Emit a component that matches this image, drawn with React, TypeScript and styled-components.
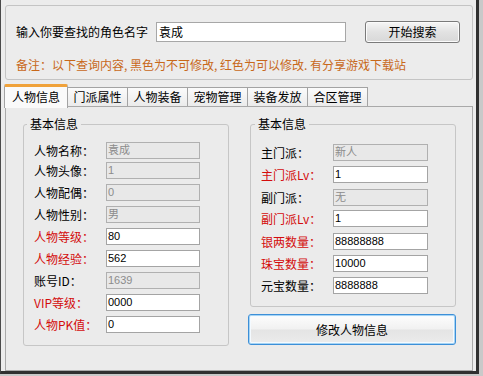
import React from "react";
import styled, { createGlobalStyle, css } from "styled-components";

const GlobalStyle = createGlobalStyle`
  html, body { margin: 0; padding: 0; background: #c9c9c9; }
  body { font-family: "Noto Sans CJK SC", "Liberation Sans", sans-serif; font-size: 12px; color: #000; }
  * { box-sizing: border-box; }
`;

const Frame = styled.div`
  width: 479px;
  height: 374px;
  background: #ececec;
  border-left: 1px solid #4a4a4a;
  border-right: 3px solid #303030;
  border-bottom: 3px solid #303030;
  padding: 5px 3px 0 4px;
  display: flex;
  flex-direction: column;
`;

const SearchGroup = styled.div`
  height: 75px;
  border: 1px solid #c4c4c4;
  border-radius: 3px;
  padding: 15px 0 0 10px;
  display: flex;
  flex-direction: column;
`;

const SearchRow = styled.div`
  display: flex;
  align-items: center;
  height: 22px;
`;

const SearchLabel = styled.span`
  width: 140px;
  line-height: 16px;
`;

const SearchInput = styled.div`
  width: 190px;
  height: 20px;
  background: #fff;
  border: 1px solid #a7a7a7;
  padding-left: 2px;
  line-height: 18px;
`;

const PushButton = styled.button`
  margin-left: 19px;
  width: 95px;
  height: 22px;
  border: 1px solid #7a7a7a;
  border-radius: 3px;
  background: linear-gradient(#f6f6f6, #e2e2e2 50%, #d8d8d8);
  box-shadow: inset 0 0 0 1px #fbfbfb;
  font-family: "Noto Sans CJK SC", sans-serif;
  font-size: 12px;
  line-height: 18px;
  padding: 0;
  color: #000;
`;

const Note = styled.div`
  margin-top: 14px;
  line-height: 16px;
  color: #c8681a;
  white-space: nowrap;
`;

const TabStrip = styled.div`
  margin-top: 4px;
  height: 22px;
  display: flex;
  align-items: flex-end;
`;

const Tab = styled.div<{ $active?: boolean }>`
  width: 60px;
  height: 19px;
  border: 1px solid #a3a3a3;
  border-bottom: none;
  border-left: none;
  background: linear-gradient(#fbfbfb, #ebebeb);
  text-align: center;
  line-height: 18px;
  font-size: 12px;
  ${(p) =>
    p.$active &&
    css`
      position: relative;
      z-index: 1;
      width: 64px;
      height: 24px;
      margin-left: -1px;
      margin-bottom: -2px;
      border-left: 1px solid #a3a3a3;
      border-top: 3px solid #f0a23a;
      border-radius: 2px 2px 0 0;
      background: #fafafa;
      line-height: 19px;
    `}
`;

const Panel = styled.div`
  height: 265px;
  border: 1px solid #a9a9a9;
  background: #ebebeb;
  padding: 9px 0 0 17px;
  display: flex;
  gap: 21px;
  align-items: flex-start;
`;

const Column = styled.div`
  display: flex;
  flex-direction: column;
`;

const Group = styled.fieldset<{ $padTop: number }>`
  margin: 0;
  width: 206px;
  min-width: 0;
  border: 1px solid #c6c6c6;
  border-radius: 3px;
  padding: ${(p) => p.$padTop}px 0 12px 10px;
`;

const Legend = styled.legend<{ $ml: number }>`
  margin-left: ${(p) => p.$ml}px;
  padding: 0 3px;
  font-size: 12px;
  line-height: 16px;
`;

const Row = styled.div<{ $mt?: number }>`
  display: flex;
  align-items: center;
  height: 17px;
  margin-top: ${(p) => p.$mt ?? 0}px;
`;

const Label = styled.span<{ $red?: boolean }>`
  width: 72px;
  font-size: 12px;
  line-height: 16px;
  color: ${(p) => (p.$red ? "#d40c0c" : "#000")};
  font-family: "Noto Sans CJK SC", "Liberation Serif", serif;
  white-space: nowrap;
`;

const Field = styled.div<{ $disabled?: boolean; $w: number }>`
  width: ${(p) => p.$w}px;
  height: 17px;
  border: 1px solid ${(p) => (p.$disabled ? "#b0b0b0" : "#a4a4a4")};
  background: ${(p) => (p.$disabled ? "#e8e8e8" : "#fff")};
  color: ${(p) => (p.$disabled ? "#8c8c8c" : "#000")};
  padding-left: 1px;
  font-family: "Liberation Sans", "Noto Sans CJK SC", sans-serif;
  font-size: 11px;
  line-height: 15px;
  white-space: nowrap;
  overflow: hidden;
`;

const BigButton = styled.button`
  margin-top: 7px;
  margin-left: -2px;
  width: 208px;
  height: 31px;
  border: 1px solid #3c8fd8;
  border-radius: 3px;
  background: linear-gradient(#fdfdfd, #f1f1f1 48%, #e4e4e4 52%, #ececec);
  box-shadow: inset 0 0 0 1px #a6d4f4, inset 0 0 0 2px #f4faff;
  font-family: "Noto Sans CJK SC", sans-serif;
  font-size: 12px;
  color: #000;
  padding: 0;
`;

type Item = { label: string; value: string; red?: boolean; disabled?: boolean; mt?: number };

const leftItems: Item[] = [
  { label: "人物名称：", value: "袁成", disabled: true },
  { label: "人物头像：", value: "1", disabled: true, mt: 3 },
  { label: "人物配偶：", value: "0", disabled: true, mt: 5 },
  { label: "人物性别：", value: "男", disabled: true, mt: 5 },
  { label: "人物等级：", value: "80", red: true, mt: 5 },
  { label: "人物经验：", value: "562", red: true, mt: 5 },
  { label: "账号ID：", value: "1639", disabled: true, mt: 5 },
  { label: "VIP等级：", value: "0000", red: true, mt: 5 },
  { label: "人物PK值：", value: "0", red: true, mt: 5 },
];

const rightItems: Item[] = [
  { label: "主门派：", value: "新人", disabled: true },
  { label: "主门派Lv：", value: "1", red: true, mt: 5 },
  { label: "副门派：", value: "无", disabled: true, mt: 6 },
  { label: "副门派Lv：", value: "1", red: true, mt: 4 },
  { label: "银两数量：", value: "88888888", red: true, mt: 6 },
  { label: "珠宝数量：", value: "10000", red: true, mt: 5 },
  { label: "元宝数量：", value: "8888888", mt: 5 },
];

const tabs = ["人物信息", "门派属性", "人物装备", "宠物管理", "装备发放", "合区管理"];

export default function App() {
  return (
    <>
      <GlobalStyle />
      <Frame>
        <SearchGroup>
          <SearchRow>
            <SearchLabel>输入你要查找的角色名字</SearchLabel>
            <SearchInput>袁成</SearchInput>
            <PushButton>开始搜索</PushButton>
          </SearchRow>
          <Note>备注：以下查询内容, 黑色为不可修改, 红色为可以修改. 有分享游戏下载站</Note>
        </SearchGroup>
        <TabStrip>
          {tabs.map((t, i) => (
            <Tab key={t} $active={i === 0}>
              {t}
            </Tab>
          ))}
        </TabStrip>
        <Panel>
          <Group $padTop={10}>
            <Legend $ml={-7}>基本信息</Legend>
            {leftItems.map((it) => (
              <Row key={it.label} $mt={it.mt}>
                <Label $red={it.red}>{it.label}</Label>
                <Field $w={94} $disabled={it.disabled}>
                  {it.value}
                </Field>
              </Row>
            ))}
          </Group>
          <Column>
            <Group $padTop={12}>
              <Legend $ml={-6}>基本信息</Legend>
              {rightItems.map((it) => (
                <Row key={it.label} $mt={it.mt}>
                  <Label $red={it.red}>{it.label}</Label>
                  <Field $w={95} $disabled={it.disabled}>
                    {it.value}
                  </Field>
                </Row>
              ))}
            </Group>
            <BigButton>修改人物信息</BigButton>
          </Column>
        </Panel>
      </Frame>
    </>
  );
}
